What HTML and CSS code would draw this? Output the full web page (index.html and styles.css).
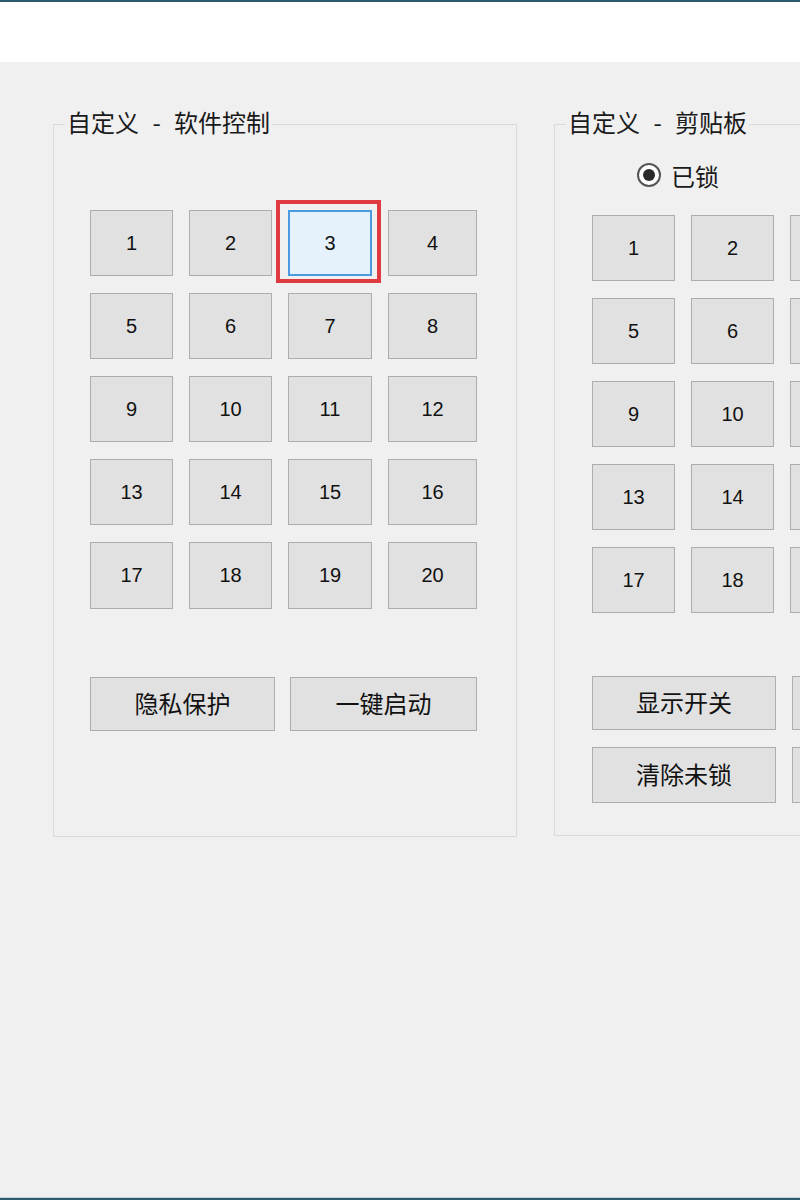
FILE: index.html
```html
<!DOCTYPE html>
<html lang="zh-CN">
<head>
<meta charset="utf-8">
<title>自定义</title>
<link rel="stylesheet" href="styles.css">
</head>
<body>
<div class="window">
  <div class="titlebar"></div>
  <div class="main">
    <fieldset class="group">
      <legend>自定义 - 软件控制</legend>
      <div class="inner inner-left">
        <div class="grid grid-left">
          <button class="btn">1</button>
          <button class="btn">2</button>
          <button class="btn active">3</button>
          <button class="btn">4</button>
          <button class="btn">5</button>
          <button class="btn">6</button>
          <button class="btn">7</button>
          <button class="btn">8</button>
          <button class="btn">9</button>
          <button class="btn">10</button>
          <button class="btn">11</button>
          <button class="btn">12</button>
          <button class="btn">13</button>
          <button class="btn">14</button>
          <button class="btn">15</button>
          <button class="btn">16</button>
          <button class="btn">17</button>
          <button class="btn">18</button>
          <button class="btn">19</button>
          <button class="btn">20</button>
        </div>
        <div class="actions actions-left">
          <button class="btn wide">隐私保护</button>
          <button class="btn wide">一键启动</button>
        </div>
      </div>
    </fieldset>
    <fieldset class="group">
      <legend>自定义 - 剪贴板</legend>
      <div class="inner inner-right">
        <label class="radio"><span class="dot"></span><span>已锁</span></label>
        <div class="grid grid-right">
          <button class="btn">1</button>
          <button class="btn">2</button>
          <button class="btn"></button>
          <button class="btn"></button>
          <button class="btn">5</button>
          <button class="btn">6</button>
          <button class="btn"></button>
          <button class="btn"></button>
          <button class="btn">9</button>
          <button class="btn">10</button>
          <button class="btn"></button>
          <button class="btn"></button>
          <button class="btn">13</button>
          <button class="btn">14</button>
          <button class="btn"></button>
          <button class="btn"></button>
          <button class="btn">17</button>
          <button class="btn">18</button>
          <button class="btn"></button>
          <button class="btn"></button>
        </div>
        <div class="actions actions-right">
          <button class="btn wide">显示开关</button>
          <button class="btn wide"></button>
          <button class="btn wide">清除未锁</button>
          <button class="btn wide"></button>
        </div>
      </div>
    </fieldset>
  </div>
  <div class="statusbar"></div>
</div>
</body>
</html>
```

FILE: styles.css
```css
html, body {
  margin: 0;
  padding: 0;
}
body {
  width: 800px;
  height: 1200px;
  overflow: hidden;
  font-family: "Liberation Sans", "Noto Sans CJK SC", sans-serif;
  color: #111;
}
.window {
  display: flex;
  flex-direction: column;
  height: 1200px;
  background: #f0f0f0;
}
.titlebar {
  height: 60px;
  border-top: 2px solid #2d5a6c;
  background: #ffffff;
  flex: none;
}
.main {
  flex: 1;
  display: flex;
  gap: 37px;
  padding: 50px 0 0 53px;
  overflow: hidden;
  align-items: flex-start;
}
.statusbar {
  flex: none;
  height: 2px;
  border-top: 1px solid #c9d3dc;
  background: #2d5a6c;
}
.group {
  flex: none;
  box-sizing: border-box;
  width: 464px;
  margin: 0;
  padding: 0;
  border: 1px solid #dadada;
  min-width: 0;
}
.group legend {
  font-family: "Noto Sans CJK SC", sans-serif;
  font-size: 24px;
  line-height: 24px;
  word-spacing: 8px;
  padding: 0 2px;
  margin-left: 11px;
  color: #1a1a1a;
  transform: translateY(-2px);
}
.inner {
  display: flex;
  flex-direction: column;
}
.inner-left {
  padding: 74px 0 105px 36px;
}
.inner-right {
  padding: 26px 0 32px 37px;
}
.grid {
  display: grid;
  grid-auto-rows: 66px;
  row-gap: 17px;
  column-gap: 16px;
}
.grid-left {
  grid-template-columns: 83px 83px 84px 89px;
  grid-template-rows: 66px 66px 66px 66px 67px;
}
.grid-right {
  grid-template-columns: 83px 83px 83px 83px;
  margin-top: 27px;
}
.btn {
  position: relative;
  box-sizing: border-box;
  margin: 0;
  padding: 0;
  background: #e1e1e1;
  border: 1px solid #adadad;
  font-family: "Liberation Sans", "Noto Sans CJK SC", sans-serif;
  font-size: 20px;
  color: #111;
}
.btn.active {
  background: #e5f1fb;
  border: 2px solid #4a9be0;
}
.btn.active::after {
  content: "";
  position: absolute;
  left: -14px;
  top: -12px;
  width: 105px;
  height: 83px;
  box-sizing: border-box;
  border: 4px solid #df3a3f;
}
.actions {
  display: grid;
}
.actions-left {
  margin-top: 68px;
  grid-template-columns: 185px 187px;
  grid-auto-rows: 54px;
  column-gap: 15px;
}
.actions-right {
  margin-top: 63px;
  grid-template-columns: 184px 184px;
  grid-template-rows: 54px 56px;
  column-gap: 16px;
  row-gap: 17px;
}
.wide {
  font-family: "Noto Sans CJK SC", sans-serif;
  font-size: 24px;
  padding-bottom: 4px;
}
.radio {
  display: flex;
  align-items: center;
  gap: 10px;
  height: 26px;
  padding-left: 45px;
  font-family: "Noto Sans CJK SC", sans-serif;
  font-size: 24px;
  color: #1a1a1a;
}
.dot {
  box-sizing: border-box;
  width: 24px;
  height: 24px;
  border-radius: 50%;
  border: 2px solid #555;
  background: #fff;
  display: flex;
  align-items: center;
  justify-content: center;
}
.dot::before {
  content: "";
  width: 12px;
  height: 12px;
  border-radius: 50%;
  background: #2a2a2a;
}
```
